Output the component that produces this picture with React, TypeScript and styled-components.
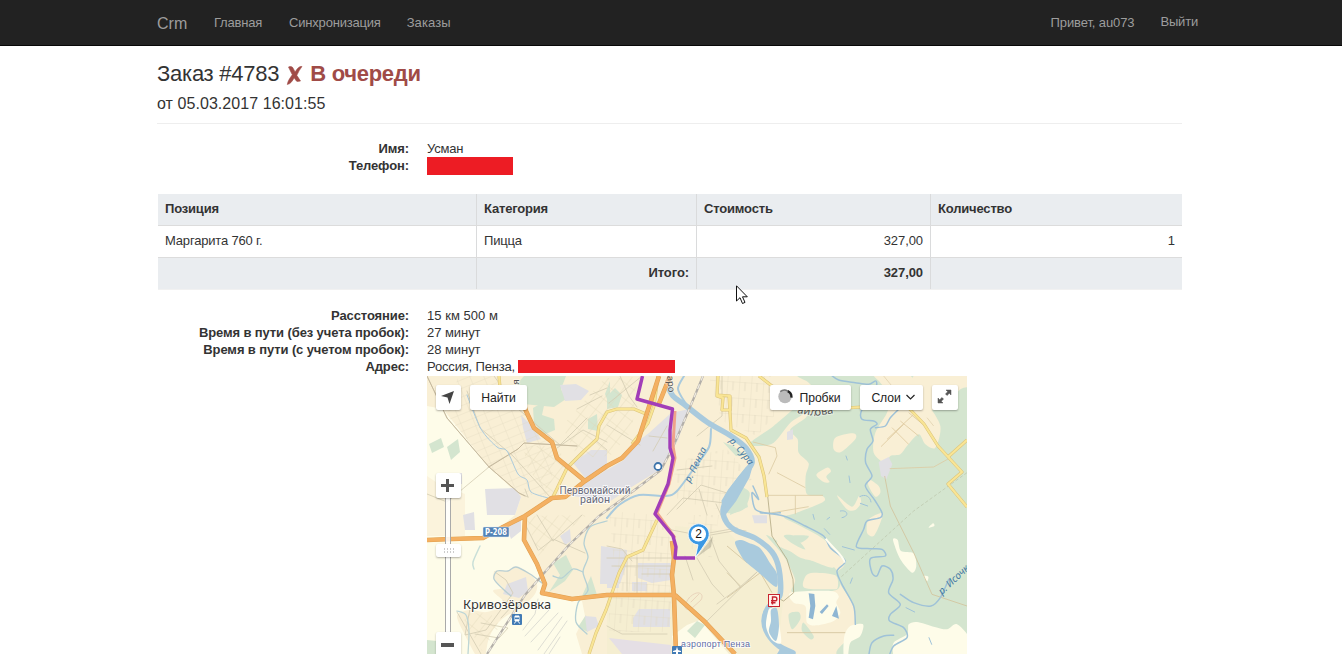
import React from "react";
import styled, { createGlobalStyle } from "styled-components";

const GlobalStyle = createGlobalStyle`
  * { box-sizing: border-box; }
  html, body { margin: 0; padding: 0; background: #fff; overflow: hidden; }
  body { font: 13px/17px "Liberation Sans", Arial, sans-serif; color: #333; }
`;

const Page = styled.div`
  height: 654px;
  overflow: hidden;
  position: relative;
`;
const Navbar = styled.nav`
  height: 46px;
  background: #222;
  border-bottom: 1px solid #080808;
`;
const NavInner = styled.div`
  width: 1041px;
  margin-left: 157px;
  height: 45px;
  display: flex;
  align-items: center;
  color: #9d9d9d;
`;
const Brand = styled.span`
  font-size: 16px;
  width: 57px;
  padding-top: 2px;
`;
const NavLink = styled.span<{ $gap?: number; $raise?: boolean; $track?: number }>`
  margin-right: ${(p) => p.$gap ?? 0}px;
  padding-bottom: ${(p) => (p.$raise ? 2 : 0)}px;
  letter-spacing: ${(p) => p.$track ?? -0.2}px;
  white-space: nowrap;
`;
const Spacer = styled.span`
  flex: 1;
`;
const Main = styled.main`
  width: 1025px;
  margin-left: 157px;
`;
const Header = styled.header`
  height: 78px;
  padding-top: 15px;
  border-bottom: 1px solid #eee;
`;
const Title = styled.h1`
  margin: 0;
  font-size: 22px;
  line-height: 26px;
  font-weight: 400;
  letter-spacing: -0.25px;
  display: flex;
  white-space: pre;
`;
const Status = styled.strong`
  color: #a04b47;
  display: flex;
  align-items: center;
  letter-spacing: -0.3px;
`;
const CrossIcon = styled.svg`
  width: 17px;
  height: 20px;
  margin: 2px 7px 0 7px;
`;
const Subtitle = styled.div`
  font-size: 16px;
  line-height: 20px;
  margin-top: 7px;
  letter-spacing: 0.06px;
`;
const Details = styled.dl<{ $top: number }>`
  margin: ${(p) => p.$top}px 0 0;
  display: grid;
  grid-template-columns: 252px 1fr;
  column-gap: 18px;
  grid-auto-rows: 17px;
`;
const Term = styled.dt`
  font-weight: 700;
  text-align: right;
  white-space: nowrap;
  letter-spacing: -0.11px;
`;
const Value = styled.dd<{ $track?: number }>`
  margin: 0;
  display: flex;
  white-space: pre;
  letter-spacing: ${(p) => p.$track ?? -0.05}px;
`;
const Redacted = styled.span<{ $w: number; $h: number; $top?: number; $left?: number }>`
  flex: none;
  width: ${(p) => p.$w}px;
  height: ${(p) => p.$h}px;
  margin: ${(p) => p.$top ?? 0}px 0 0 ${(p) => p.$left ?? 0}px;
  background: #ed1c24;
`;
const Table = styled.table`
  width: 1024px;
  margin: 20px 0 0 1px;
  table-layout: fixed;
  border-collapse: separate;
  border-spacing: 0;
  border-bottom: 1px solid #f1f1f1;
`;
const Row = styled.tr<{ $shade?: boolean }>`
  height: 32px;
  background: ${(p) => (p.$shade ? "#eaedf0" : "#fff")};
  font-weight: ${(p) => (p.$shade ? 700 : 400)};
  &:first-child { height: 31px; }
`;
const Cell = styled.td<{ $right?: boolean }>`
  padding: 0 7px 2px;
  text-align: ${(p) => (p.$right ? "right" : "left")};
  letter-spacing: ${(p) => (p.$right ? -0.08 : -0.18)}px;
  td + & { border-left: 1px solid #dadbdc; }
  tr + tr > & { border-top: 1px solid #dcdcdc; padding-bottom: 3px; }
`;
const MapBox = styled.section`
  position: relative;
  width: 540px;
  height: 278px;
  margin: 1px 0 0 270px;
  overflow: hidden;
  background: #f8efd7;
`;
const MapSvg = styled.svg`
  display: block;
`;
const MapControl = styled.button<{ $x: number; $y: number; $w: number; $h?: number }>`
  position: absolute;
  left: ${(p) => p.$x}px;
  top: ${(p) => p.$y}px;
  width: ${(p) => p.$w}px;
  height: ${(p) => p.$h ?? 25}px;
  border: 0;
  padding: 0;
  border-radius: 2px;
  background: #fff;
  box-shadow: 0 1px 2px rgba(0, 0, 0, 0.3);
  display: flex;
  align-items: center;
  justify-content: center;
  color: #222;
  font: 12.2px "Liberation Sans", Arial, sans-serif;
  letter-spacing: -0.1px;
  white-space: nowrap;
`;
const ZoomTrack = styled.div`
  position: absolute;
  left: 18px;
  top: 122px;
  width: 6px;
  height: 136px;
  background: rgba(255, 255, 255, 0.85);
  border: solid #aaa;
  border-width: 0 1px;
`;
const Pointer = styled.svg`
  position: absolute;
  left: 736px;
  top: 285px;
`;

const green = "#d4e5cf";
const pale = "#fefce9";
const cream = "#f9efd5";
const grey = "#e1e0e4";
const water = "#a9cadd";

// Turns "x,y x,y ..." into a rounded curve through every point.
const curve = (list: string, closed = false) => {
  const pts = list.split(" ").map((p) => p.split(",").map(Number));
  const n = pts.length;
  const at = (i: number) => (closed ? pts[(i + n) % n] : pts[Math.max(0, Math.min(n - 1, i))]);
  let d = `M${pts[0][0]} ${pts[0][1]}`;
  for (let i = 0; i < (closed ? n : n - 1); i++) {
    const [a, b, c, e] = [at(i - 1), at(i), at(i + 1), at(i + 2)];
    d += `C${b[0] + (c[0] - a[0]) / 7} ${b[1] + (c[1] - a[1]) / 7} ${c[0] - (e[0] - b[0]) / 7} ${c[1] - (e[1] - b[1]) / 7} ${c[0]} ${c[1]}`;
  }
  return closed ? d + "Z" : d;
};

const majorRoads = [
  "M94 20L99 35L107 52L125 66L130 82L158 105",
  "M0 164L25 163L56 162L76 151L98 140L125 122L138 121L158 105L180 90L195 82L211 65L220 37L232 0",
  "M98 139L97 164L110 188L118 208L115 217L145 223L180 219L248 219",
  "M231 30L243 0",
  "M245 165L247 182L245 199L247 220L249 278",
  "M248 219L278 246L308 278",
];
const minorRoads = [
  "M126 121L140 92L155 77L170 63L172 50L180 36L190 33L207 33L219 38",
  "M231 0L227 30L221 47L205 68",
  "M72 0L73 12L88 20",
  "M291 0L290 20L296 22L295 34L303 34L303 20L291 19",
  "M302 20L304 54L319 62L332 81L337 100L340 121",
  "M332 0L345 10L360 31L385 34L435 31",
  "M475 25L497 48L511 70L535 96L521 108L540 131",
  "M521 81L540 64",
  "M230 144L216 174L200 181L192 197L179 234L169 257L162 278",
];
const tracks = [
  "M0 0L20 42L62 91L92 117L101 121M61 91L91 73L97 67L150 70M101 121L98 113M0 118L20 126L62 91M67 0L90 32L133 69L160 42M40 15L53 52L86 80L123 121",
  "M130 72L156 54L180 66M168 64L180 74M182 27L215 0M180 49L213 69M193 0L202 20L210 31M163 19L180 12M150 33L175 20M240 50L226 75M240 62L222 60",
  "M283 160L292 185L313 211L290 228M313 211L330 196M278 160L312 154L319 155M280 245L330 196M270 182L285 208L297 221M180 250L195 258L240 258M180 182H246M180 170L195 173L205 185",
  "M228 139L245 154L271 159L310 152M200 181V215M185 190H246M210 182V219M215 198H246M258 180L266 204",
  "M250 133L274 109L300 117M240 139L256 122L306 128M280 139L272 113M294 139L289 128M250 94L285 90M295 0V40L270 60",
  "M110 139L126 165L155 139M112 174L126 163L158 177M98 148L111 174M30 236L54 278M43 233L38 259L59 254L73 235L86 217L79 204L68 196M54 247L81 252L72 262L48 258M76 225L87 228L74 242",
];
const outlines = "M96 254L108 238L111 223M98 260L122 234M104 266L131 237M111 274L135 241M117 278L140 245M122 278L133 261";

// The forest side of the map is surveyed at three units per pixel.
const forest = [
  "240,-10 730,-10 730,844 350,844 360,790 385,750 380,690 340,625 330,590 352,560 290,490 220,450 170,424 205,412 288,378 286,360 240,355 236,300 245,262 215,230 212,190 190,160 240,120 220,80 290,60 245,20",
  "118,478 165,505 220,545 320,572 332,640 200,650 204,610 170,540",
  "70,200 140,150 220,85 232,110 190,140 140,200 90,210",
  "0,360 30,330 68,350 50,400 0,410",
];
const clearings = [
  "440,-10 540,-10 600,80 640,150 625,215 595,205 575,175 540,210 520,235 490,240 475,262 440,230 445,170 480,110 490,60 460,20",
  "325,185 378,172 386,188 342,228 320,220",
  "268,296 300,275 312,286 298,302 308,318 290,318",
  "330,358 375,392 396,360 402,380 385,402 360,400",
  "425,310 455,330 460,350 445,362 425,330",
  "425,430 466,410 460,440 440,480 420,470",
  "150,505 175,465 215,465 260,505 300,520 325,560 315,575 270,560 205,532",
  "236,600 260,590 325,598 332,635 310,640 232,635",
  "600,100 660,80 700,40 730,30 730,0 560,0",
];
const riverPatches = [
  "170,480 200,480 235,520 200,505",
  "185,715 215,708 220,730 195,760",
  "230,740 260,780 250,790 225,765",
  "190,480 245,480 220,500",
];
const meadows = [
  "192,650 310,645 335,660 328,680 340,710 320,735 270,748 240,740 235,690 200,680",
  "352,780 370,750 408,745 400,780 370,800 362,844 350,844",
  "498,834 500,800 540,775 545,745 570,738 620,752 660,760 690,745 730,790 730,844 500,844",
  "498,492 512,492 522,525 560,532 568,570 555,590 520,550",
  "590,600 604,602 600,616",
  "605,455 618,442 622,450",
];
const streams = [
  "310,-5 335,12 385,20 425,25 447,15 445,40 405,100 405,130 440,135 450,145 430,160 438,195 420,220 416,260 435,300 415,330 445,375 465,410 460,425 420,435 410,460 388,512 430,518 465,520 475,540 430,548 435,590 450,600 465,570 490,580 498,610 485,650 520,685 490,715 488,735 530,755 540,785 500,810 485,844",
  "520,95 490,125 475,150 445,155",
  "100,410 170,420 235,450 290,480 310,515 355,555 330,585 345,625 380,690 385,745",
  "78,330 95,370 75,350 85,400 125,412 160,410",
  "520,655 560,680 612,690 640,665 665,610",
  "426,834 435,800 470,780 500,778",
];

const CityMap = () => (
  <MapSvg width="540" height="278" viewBox="0 0 540 278">
    <defs>
      <pattern id="lanesA" width="13" height="8" patternUnits="userSpaceOnUse" patternTransform="rotate(-22)">
        <path d="M0 0H13M0 0V8" stroke="#e2d8be" strokeWidth=".7" fill="none" />
      </pattern>
      <pattern id="lanesB" width="9" height="13" patternUnits="userSpaceOnUse" patternTransform="rotate(38)">
        <path d="M0 0H9M0 0V13" stroke="#e0d5b8" strokeWidth=".7" fill="none" />
      </pattern>
      <pattern id="lanesC" width="12" height="16" patternUnits="userSpaceOnUse" patternTransform="rotate(4)">
        <path d="M0 0H12M0 0V16M6 0V9" stroke="#e1d8c0" strokeWidth=".7" fill="none" />
      </pattern>
    </defs>

    <path d="M0 0H540V278H0Z" fill={cream} />
    <path d="M248 150L300 155L340 195L357 218L350 278H180V219L245 215Z" fill="#f5eed1" />
    <path d="M0 30L16 33L62 91L94 121L88 139L70 154L98 143L98 165L115 205L113 219L155 225L158 240L149 258L155 278H0Z" fill={pale} />
    <path d="M245 260L260 249L273 244L302 278H248Z" fill={pale} />
    <path d={curve("68,195 81,195 90,191 103,198 110,208 108,218 96,230 74,244 62,262 56,290 48,278 38,259 30,240 42,234 60,236 78,228 66,215 76,212 67,203", true)} fill={cream} />
    <path d="M0 100L12 108L38 118L38 150L20 160H0ZM14 139H38V160H14Z" fill={cream} opacity=".7" />

    <g fill={green}>
      <path d="M97 0H139L134 13L139 23L127 31L96 28L90 8Z" />
      <path d="M106 32L118 25L115 39L127 43L128 54L116 59L107 47Z" />
      <path d="M2 68L14 62L17 71L5 77ZM20 71L31 63L33 76L24 84ZM161 43L170 38L171 55L161 53Z" />
      <path d="M180 20L188 12L195 19L191 31L180 33ZM133 199L126 187L139 179L146 194L138 205L122 216ZM178 18L183 5V31Z" />
      <path d="M296 66L306 70L318 79L309 80ZM303 139L306 120L318 117L321 131ZM260 255L270 245L278 249L268 262Z" />
      <path d="M0 264L10 265L17 278H0ZM151 251L159 239L161 256ZM155 220L164 200L170 219Z" />
    </g>
    <g fill={grey}>
      <path d="M133 9L149 8L162 15L154 24L138 25ZM94 39L105 50L114 63L100 67L96 52ZM58 113L88 112L94 121L88 139H60ZM146 87L164 74L180 74V94L160 104Z" />
      <path d="M202 72L222 57L244 37L262 33L251 64L234 93L203 112L182 126L160 122L139 119L158 107L180 94L197 84Z" />
      <path d="M79 149L94 144L94 155L84 163ZM80 208L99 201L101 215L92 222L76 218ZM133 160L143 153L144 165L138 169ZM174 170L200 174L199 190L193 208H173ZM211 187H244V204L225 207L211 202ZM212 233H243V251H206V242ZM180 187L192 190L192 212H180ZM205 206H220V215H205Z" />
      <path d="M158 240L169 241L172 250L160 256ZM36 139L47 136L48 154H38ZM28 97H35V108H28Z" />
    </g>
    <path d="M182 262L244 269V278H195Z" fill="#e5dfe5" />

    <g transform="translate(300 0) scale(.33333)">
      {forest.map((p) => <path key={p} d={curve(p, true)} fill={green} />)}
      {clearings.map((p) => <path key={p} d={curve(p, true)} fill={cream} />)}
      {riverPatches.map((p) => <path key={p} d={curve(p, true)} fill={green} />)}
      {meadows.map((p) => <path key={p} d={curve(p, true)} fill={pale} />)}
      <path d="M455 258L485 243L496 265L478 310L462 300ZM180 168L198 160V190L180 192ZM75 418H120V442H82Z" fill={grey} />
      <path d="M470 0L540 85M620 150L600 125" stroke="#e6d8b8" strokeWidth="3" fill="none" />
      <g fill="none" stroke="#d2c39c" strokeWidth="2.500">
        <path d="M120 358L288 358M205 358V415M125 412L245 392M78 198L145 215L150 240L125 295M150 290L235 335M488 278L620 273L665 248" stroke="#dccba3" />
        <path d="M473 300L490 390L560 530L615 655L720 690" />
        <path d="M720 290L560 405L340 605" strokeDasharray="10 6" stroke="#bfcab1" />
        <path d="M122 360L135 480L180 550L198 610L200 650L170 675L160 670" stroke="#b5ab85" />
        <path d="M0 665L100 590L135 650M0 590L40 630M0 510L60 560M180 770H355" />
        <path d="M480 190L560 115M495 155L545 205M520 135L575 180M462 212L530 145M545 110L600 155" stroke="#dfcaa0" />
      </g>
      <g fill="none" stroke="#9fc2d8" strokeWidth="4.500" strokeLinecap="round">
        {streams.map((p) => <path key={p} d={curve(p)} />)}
        <path d="M398 362C415 352 430 362 432 378M400 382L422 390M340 405C360 400 370 420 345 425M292 458L308 475M258 415L262 430M366 300L369 320M357 240L361 252M300 430L308 424M346 512L382 522M370 622L376 606M537 695L563 708M606 785L614 805" strokeWidth="3" />
      </g>
      <path d="M296 488C315 515 350 538 353 560" stroke="#fffdf0" strokeWidth="6" fill="none" />
      <g fill="#8fb6d3">
        <path d="M245 652L262 654L265 690L258 730L245 725L250 690ZM278 708L300 685L305 690L285 714ZM315 720L328 690L336 728Z" />
      </g>
    </g>

    <path d="M31 0H70L95 34L130 70L122 119L98 119L62 91L20 40Z" fill="url(#lanesA)" />
    <path d="M135 50L178 2L210 1L205 55L183 80L151 82ZM96 70H131L140 91L126 120L101 94Z" fill="url(#lanesB)" />
    <path d="M265 80L300 73L325 103L291 133L250 125ZM182 135L228 139L245 165L243 219L190 217ZM247 98L263 80L275 112L251 127ZM262 139H292L285 182L260 171ZM182 220H244V256H182ZM282 0H347V40L330 60L295 45Z" fill="url(#lanesC)" />
    <path d="M99 140L160 139L128 164L111 180ZM34 238L63 237L73 250L55 275Z" fill="url(#lanesB)" />

    <g fill="none" strokeLinejoin="round" strokeLinecap="round">
      {tracks.map((d) => <path key={d} d={d} stroke="#d3cbb2" strokeWidth=".8" />)}
      <path d={outlines} stroke="#d6d6ce" strokeWidth=".8" />
      <path d="M262 222C270 213 278 217 274 224L264 233C257 235 256 230 262 222ZM264 226L272 218" stroke="#ead4bb" />
      <path d="M20 42L62 91L92 117L98 120M0 0L20 42M62 91L91 73L97 67L150 70" stroke="#c6b99e" />
      <g stroke={water}>
        <path d={curve("40,19 54,53 70,71 80,75 91,98 100,104 104,116 121,122")} strokeWidth="1" />
        <path d={curve("53,170 46,186 47,193")} stroke="#c9dfd8" strokeWidth="1.500" />
        <path d={curve("115,207 103,198 89,191 81,195 70,195 67,203 76,213 84,220")} stroke="#b9ced2" strokeWidth="1.300" />
        <path d={curve("30,235 39,239 42,255 41,278")} stroke="#bdd6d6" strokeWidth="1.300" />
        <path d={curve("180,145 163,151 157,167 161,181 156,196 161,214 151,227 149,246 160,258")} stroke="#b5d0d4" strokeWidth="1.300" />
        <path d={curve("156,196 146,193 135,202 126,200")} stroke="#b5d0d4" strokeWidth="1.300" />
        <path d={curve("284,53 282,71 268,91 250,115 239,120 212,119 192,129 180,142")} strokeWidth="2" />
        <path d={curve("259,28 251,13 257,0")} strokeWidth="2" />
        <path d={curve("240,9 246,20 258,29 280,46 304,60 319,72 325,87 312,104 301,120 296,135 300,147 310,155 328,162 345,176 352,193 353,219 341,232 337,245 341,258 352,270 366,277")} strokeWidth="5.500" />
        <path d="M320 92L325 87L321 101L308 124L298 137L296 125L302 115Z" strokeWidth="3" fill={water} />
      </g>
    </g>
    <path d={curve("308,167 314,164 322,167 333,172 343,187 350,198 349,211 331,196 317,184", true)} fill={water} />
    <path d={curve("342,233 348,235 352,248 354,267 345,264 339,250", true)} fill="#fffdf0" />
    <path d={curve("344,234 350,233 352,250 349,265 342,256 344,245", true)} fill={water} />
    <path d="M350 278L353 273L366 276V278Z" fill={water} />

    <path d="M276 0L261 36L246 71L234 94L197 122L172 140L143 168L118 196L98 219L60 278" fill="none" stroke="#b3afa9" strokeWidth="2.200" />
    <path d="M276 0L261 36L246 71L234 94L197 122L172 140L143 168L118 196L98 219L60 278" fill="none" stroke="#eee9df" strokeWidth="1.300" strokeDasharray="5 4" />
    <g fill="none" strokeLinejoin="round">
      {minorRoads.map((d) => <path key={d} d={d} stroke="#dcc47a" strokeWidth="3.200" />)}
      {minorRoads.map((d) => <path key={d} d={d} stroke="#f9e595" strokeWidth="2.100" />)}
      {majorRoads.map((d) => <path key={d} d={d} stroke="#e0a050" strokeWidth="4.600" />)}
      {majorRoads.map((d) => <path key={d} d={d} stroke="#f4b062" strokeWidth="3.400" />)}
      <path d="M248 35L246 70L248 82L242 108L230 137L248 162" stroke="#efa28a" strokeWidth="3" />
      <path d="M215.500 0L210 23L245.500 33L243 54L243 72L246 82L241 108L228 138L246 160L249 171L248 182H268" stroke="#a23db8" strokeWidth="3.400" />
    </g>
    <circle cx="231" cy="90.500" r="3.500" fill="#fff" stroke="#3c73ab" strokeWidth="1.800" />

    <g fontFamily="Noto Sans, Open Sans, sans-serif" paintOrder="stroke" stroke="#fff" strokeOpacity=".75" strokeWidth="2" strokeLinejoin="round">
      <g fontFamily="Roboto, Noto Sans, sans-serif" fontSize="10" fill="#666979">
        <text x="132.500" y="117.500" textLength="71" lengthAdjust="spacingAndGlyphs">Первомайский</text>
        <text x="153" y="127" textLength="30" lengthAdjust="spacingAndGlyphs">район</text>
      </g>
      <text x="36" y="232.500" fontSize="12" fill="#333" textLength="88" lengthAdjust="spacingAndGlyphs">Кривозёровка</text>
      <text x="254" y="270.500" fontFamily="Liberation Sans, Arial, sans-serif" fontSize="9" fill="#5f6da5" textLength="69">аэропорт Пенза</text>
      <g fontStyle="italic" fontSize="9.500" fill="#4579a3" strokeOpacity="0">
        <text transform="translate(263 107) rotate(-64)" textLength="38">р. Пенза</text>
        <text transform="translate(302 65) rotate(50)" textLength="32">р. Сура</text>
        <text transform="translate(515 219) rotate(-43)" fontSize="10">р. Исочка</text>
      </g>
      <g fontSize="9.500" fill="#555" strokeOpacity=".4">
        <text transform="translate(92 14) rotate(-90)">ая</text>
        <text transform="translate(240 0) rotate(85)">аро</text>
        <text transform="translate(370 37) rotate(10)" fontSize="11">айл</text>
        <text transform="translate(388 40) rotate(-8)" fontSize="11">ова</text>
      </g>
    </g>

    <rect x="56" y="151" width="26" height="10" rx="1" fill="#5383b6" stroke="#e4edf5" strokeWidth=".5" />
    <text x="58" y="159" fontFamily="DejaVu Sans, sans-serif" fontSize="8" fontWeight="700" fill="#fff" textLength="22" lengthAdjust="spacingAndGlyphs">Р-208</text>
    <g transform="translate(85 238)">
      <rect width="10" height="11" rx="1" fill="#427bb5" />
      <path d="M3 2H7V7H3ZM3.500 7.500L2.500 9.500M6.500 7.500L7.500 9.500" fill="#fff" stroke="#fff" />
      <path d="M3 3.500H7V5.200H3Z" fill="#427bb5" />
    </g>
    <g transform="translate(245 270)">
      <rect width="10" height="10" rx="1" fill="#427bb5" />
      <path d="M5 .8L6 4L9 5V6H6V8H4V6H1V5L4 4Z" fill="#fff" />
    </g>
    <g transform="translate(341.500 218.500)">
      <rect width="11" height="12" fill="#fff4ee" stroke="#c8252f" />
      <path d="M4 10V2.500H6.500C9 2.500 9 6.300 6.500 6.300H2.500M2.500 8.300H7" fill="none" stroke="#c8252f" strokeWidth="1.400" />
    </g>

    <path d="M270 181L281 167L286 160L284 171Z" fill="#776" opacity=".3" />
    <path d="M268.500 181L271 168.800A10.500 10.500 0 1 1 280.500 164C276 171 272 177 268.500 181Z" fill="#3a98e4" stroke="#fff" strokeWidth=".8" />
    <circle cx="271.500" cy="158" r="7.600" fill="#fff" />
    <text x="271.500" y="162.300" fontFamily="Liberation Sans, Arial, sans-serif" fontSize="12" textAnchor="middle" fill="#111">2</text>
  </MapSvg>
);

export default function App() {
  return (
    <Page>
      <GlobalStyle />
      <Navbar>
        <NavInner>
          <Brand>Crm</Brand>
          <NavLink $gap={27}>Главная</NavLink>
          <NavLink $gap={26}>Синхронизация</NavLink>
          <NavLink $track={0.1}>Заказы</NavLink>
          <Spacer />
          <NavLink $gap={26} $track={-0.1}>Привет, au073</NavLink>
          <NavLink $raise>Выйти</NavLink>
        </NavInner>
      </Navbar>
      <Main>
        <Header>
          <Title>
            Заказ #4783
            <Status>
              <CrossIcon viewBox="0 0 16 20">
                <path d="M2 2C4.500 1 6 1.500 7 4L8.600 7C10.500 4 12.500 1 15.500 1.500C13.500 4 11.800 7 10.300 10.300L14 16C11.500 16.500 10.300 17 9.300 15.200L7.700 12.800C6.300 15 4.500 19 .8 19.500C1.300 16 3.800 12.500 5.800 9.800Z" fill="#a04b47" stroke="#a04b47" strokeWidth=".6" />
              </CrossIcon>
              В очереди
            </Status>
          </Title>
          <Subtitle>от 05.03.2017 16:01:55</Subtitle>
        </Header>
        <Details $top={16}>
          <Term>Имя:</Term>
          <Value $track={-0.2}>Усман</Value>
          <Term>Телефон:</Term>
          <Value><Redacted $w={86} $h={18} /></Value>
        </Details>
        <Table>
          <colgroup>
            <col style={{ width: 318 }} />
            <col style={{ width: 220 }} />
            <col style={{ width: 234 }} />
            <col style={{ width: 252 }} />
          </colgroup>
          <tbody>
            <Row $shade>
              <Cell>Позиция</Cell>
              <Cell>Категория</Cell>
              <Cell>Стоимость</Cell>
              <Cell>Количество</Cell>
            </Row>
            <Row>
              <Cell>Маргарита 760 г.</Cell>
              <Cell>Пицца</Cell>
              <Cell $right>327,00</Cell>
              <Cell $right>1</Cell>
            </Row>
            <Row $shade>
              <Cell />
              <Cell $right>Итого:</Cell>
              <Cell $right>327,00</Cell>
              <Cell />
            </Row>
          </tbody>
        </Table>
        <Details $top={17}>
          <Term>Расстояние:</Term>
          <Value $track={0.03}>15 км 500 м</Value>
          <Term>Время в пути (без учета пробок):</Term>
          <Value>27 минут</Value>
          <Term>Время в пути (с учетом пробок):</Term>
          <Value>28 минут</Value>
          <Term>Адрес:</Term>
          <Value $track={-0.17}>Россия, Пенза,<Redacted $w={157} $h={13} $top={2} $left={3} /></Value>
        </Details>
        <MapBox>
          <CityMap />
          <MapControl $x={9} $y={9} $w={25}>
            <svg width="15" height="15" viewBox="0 0 15 15" style={{ marginRight: 3 }}><path d="M14 1L9.500 14L7.500 7.500L1 6Z" fill="#444" /></svg>
          </MapControl>
          <MapControl $x={43} $y={9} $w={57}>Найти</MapControl>
          <MapControl $x={343} $y={9} $w={81}>
            <svg width="16" height="15" viewBox="0 0 15 14" style={{ margin: "0 11px 2px -4px" }}>
              <circle cx="7.500" cy="7" r="6.300" fill="#bbb" />
              <path d="M10 2A6 6 0 0 1 13.500 8" fill="none" stroke="#222" strokeWidth="2.200" />
              <path d="M3 2.500A6 6 0 0 1 10 1.800" fill="none" stroke="#777" strokeWidth="1.500" />
            </svg>
            <span style={{ marginLeft: -4 }}>Пробки</span>
          </MapControl>
          <MapControl $x={433} $y={9} $w={63}>
            Слои
            <svg width="11" height="7" viewBox="0 0 10 7" style={{ marginLeft: 4, marginRight: -4 }}><path d="M1 1L5 5L9 1" fill="none" stroke="#222" strokeWidth="1.200" /></svg>
          </MapControl>
          <MapControl $x={505} $y={9} $w={26}>
            <svg width="15" height="15" viewBox="0 0 15 15" style={{ margin: "0 2px 2px 0" }}><path d="M9 1H14V6L12.300 4.300L10 6.500L8.500 5L10.700 2.700ZM6 14H1V9L2.700 10.700L5 8.500L6.500 10L4.300 12.300Z" fill="#555" stroke="#555" strokeWidth=".5" /></svg>
          </MapControl>
          <ZoomTrack />
          <MapControl $x={9} $y={97} $w={25}>
            <svg width="13" height="13" viewBox="0 0 13 13" style={{ marginRight: 2 }}><path d="M5 0H8V5H13V8H8V13H5V8H0V5H5Z" fill="#555" /></svg>
          </MapControl>
          <MapControl $x={9} $y={168} $w={25} $h={13}>
            <svg width="11" height="5" viewBox="0 0 11 5"><path d="M1 1H11M1 4H11" stroke="#999" strokeDasharray="1 2" /></svg>
          </MapControl>
          <MapControl $x={9} $y={256} $w={25}>
            <svg width="13" height="4" viewBox="0 0 13 4" style={{ marginRight: 2 }}><rect width="13" height="4" fill="#555" /></svg>
          </MapControl>
        </MapBox>
      </Main>
      <Pointer width="13" height="20" viewBox="0 0 13 20">
        <path d="M.5 .8V16L4 12.700L6.500 18.500L9 17.400L6.500 11.800H11.300Z" fill="#fff" stroke="#111" />
      </Pointer>
    </Page>
  );
}
